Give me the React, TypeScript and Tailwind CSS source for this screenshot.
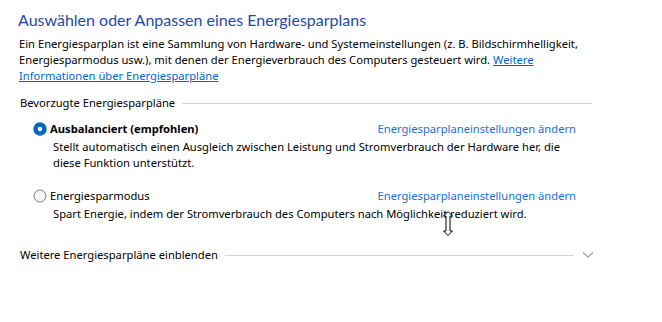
import React from "react";

function RadioMark({ checked }: { checked: boolean }) {
    return (
        <svg width="14" height="14" viewBox="0 0 14 14" className="shrink-0">
            {checked ? (
                <circle cx="7" cy="7" r="4.5" fill="#ffffff" stroke="#0067c0" strokeWidth="4.4" />
            ) : (
                <circle cx="7" cy="7" r="6" fill="#f7f7f7" stroke="#7a7a7a" strokeWidth="1" />
            )}
        </svg>
    );
}

function SectionHeader({ label, chevron }: { label: string; chevron?: boolean }) {
    return (
        <div className="flex items-center h-4">
            <span className="whitespace-nowrap">{label}</span>
            <div className="flex-1 h-px bg-[#d4d4d4] ml-[7px]" />
            {chevron && (
                <svg width="12" height="8" viewBox="0 0 12 8" className="ml-[8px] mr-[-1px]">
                    <path d="M1 1.5 L6 6 L11 1.5" fill="none" stroke="#9a9a9a" strokeWidth="1.2" />
                </svg>
            )}
        </div>
    );
}

interface PlanProps {
    name: string;
    desc: React.ReactNode;
    checked: boolean;
}

function Plan({ name, desc, checked }: PlanProps) {
    return (
        <div className="pl-[13px] pr-[16px]">
            <div className="flex items-center h-4 whitespace-nowrap">
                <RadioMark checked={checked} />
                <span className={checked ? "ml-[3px] font-bold" : "ml-[3px]"}>{name}</span>
                <a className="ml-auto text-[#1a6fd6] cursor-pointer">Energiesparplaneinstellungen ändern</a>
            </div>
            <p className="mt-[2px] pl-[20px] whitespace-nowrap">{desc}</p>
        </div>
    );
}

export default function App() {
    return (
        <div className="relative w-[662px] h-[322px] bg-white overflow-hidden text-[11.2px] leading-4 text-black font-['Noto_Sans',sans-serif]">
            <div className="pl-[19px] pt-[7px] w-[592px]">
                <h1 className="ml-[-1px] text-[16px] leading-[26px] text-[#1f4aa8] font-normal font-['Lato',sans-serif]">
                    Auswählen oder Anpassen eines Energiesparplans
                </h1>
                <p className="mt-[3px] whitespace-nowrap">
                    Ein Energiesparplan ist eine Sammlung von Hardware- und Systemeinstellungen (z. B. Bildschirmhelligkeit,
                    <br />
                    Energiesparmodus usw.), mit denen der Energieverbrauch des Computers gesteuert wird.{" "}
                    <a className="text-[#0066cc] underline cursor-pointer">
                        Weitere
                        <br />
                        Informationen über Energiesparpläne
                    </a>
                </p>

                <div className="mt-[11px] pl-px">
                    <SectionHeader label="Bevorzugte Energiesparpläne" />
                    <div className="mt-[10px]">
                        <Plan
                            checked
                            name="Ausbalanciert (empfohlen)"
                            desc={
                                <>
                                    Stellt automatisch einen Ausgleich zwischen Leistung und Stromverbrauch der Hardware her, die
                                    <br />
                                    diese Funktion unterstützt.
                                </>
                            }
                        />
                    </div>
                    <div className="mt-[17px]">
                        <Plan
                            checked={false}
                            name="Energiesparmodus"
                            desc="Spart Energie, indem der Stromverbrauch des Computers nach Möglichkeit reduziert wird."
                        />
                    </div>
                    <div className="mt-[25px] mr-[-1px]">
                        <SectionHeader label="Weitere Energiesparpläne einblenden" chevron />
                    </div>
                </div>
            </div>

            {/* mouse cursor (vertical resize) */}
            <svg className="absolute left-[442px] top-[211px]" width="12" height="25" viewBox="0 0 12 25">
                <path
                    d="M6 0.5 L10.5 5 L8 5 L8 20 L10.5 20 L6 24.5 L1.5 20 L4 20 L4 5 L1.5 5 Z"
                    fill="#ffffff"
                    stroke="#000000"
                    strokeWidth="1"
                />
            </svg>
        </div>
    );
}
